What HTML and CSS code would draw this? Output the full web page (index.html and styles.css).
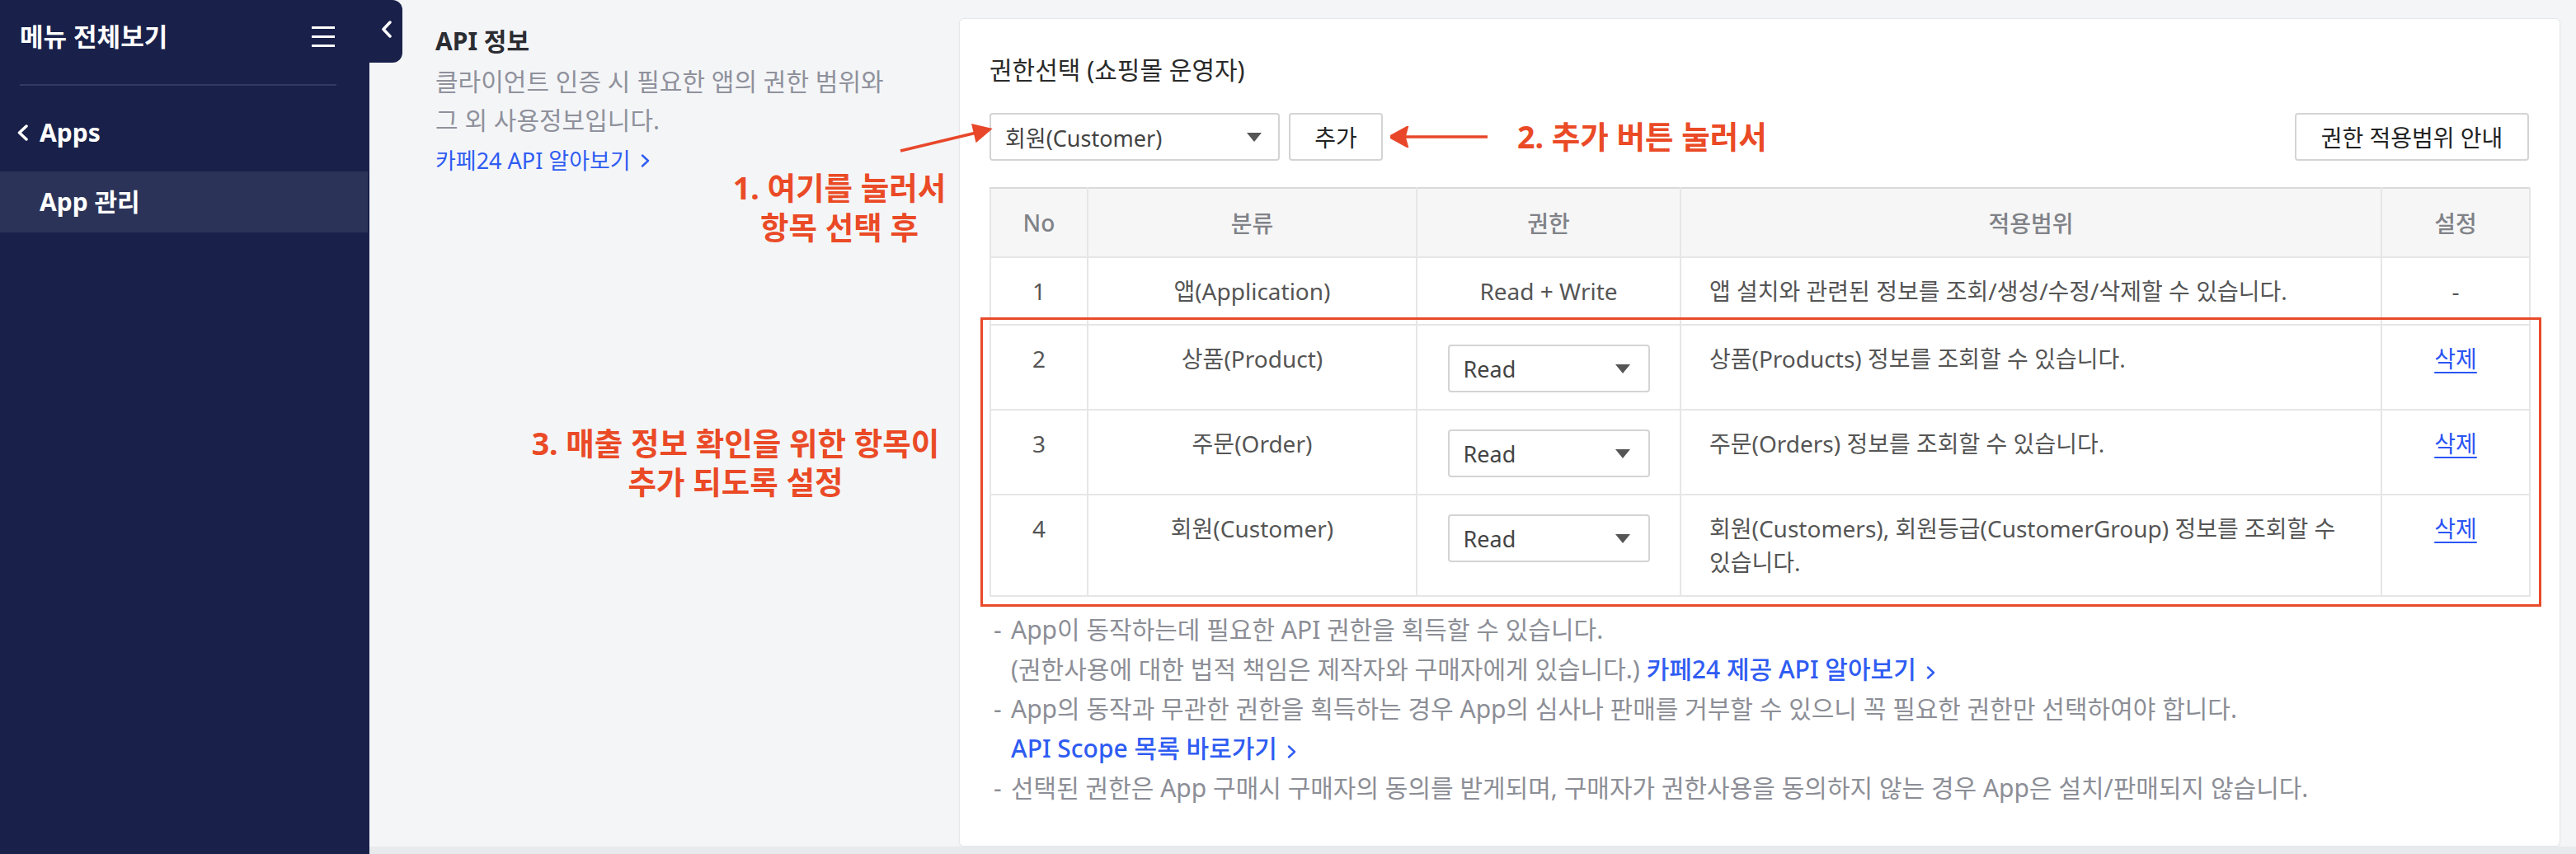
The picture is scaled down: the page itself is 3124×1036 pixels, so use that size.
FILE: index.html
```html
<!DOCTYPE html>
<html lang="ko">
<head>
<meta charset="utf-8">
<title>App 관리 - API 정보</title>
<link rel="stylesheet" href="styles.css">
</head>
<body>
<aside class="sidebar">
  <div class="side-head">
    <span class="side-title">메뉴 전체보기</span>
    <svg class="burger" width="28" height="25" viewBox="0 0 28 25"><rect x="0" y="0" width="28" height="3"/><rect x="0" y="11" width="28" height="3"/><rect x="0" y="22" width="28" height="3"/></svg>
  </div>
  <div class="side-divider"></div>
  <div class="side-back">
    <svg class="side-chev" width="14" height="20" viewBox="0 0 14 20"><path d="M12 2 L3.5 10 L12 18"/></svg>
    <span>Apps</span>
  </div>
  <div class="side-item">App 관리</div>
  <div class="side-tab">
    <svg class="tab-chev" width="13" height="21" viewBox="0 0 13 21"><path d="M11 2 L3 10.5 L11 19"/></svg>
  </div>
</aside>

<div class="main">
  <div class="content">
    <section class="intro">
      <h2 class="intro-title">API 정보</h2>
      <p class="intro-desc">클라이언트 인증 시 필요한 앱의 권한 범위와<br>그 외 사용정보입니다.</p>
      <a class="link intro-link" href="#">카페24 API 알아보기 <svg class="chev" width="11" height="16" viewBox="0 0 11 16"><path d="M2 1.5 L9 8 L2 14.5"/></svg></a>
    </section>

    <section class="card">
      <h3 class="card-title">권한선택 (쇼핑몰 운영자)</h3>
      <div class="controls">
        <div class="select select-wide"><span>회원(Customer)</span><svg class="caret" width="18" height="11" viewBox="0 0 18 11"><polygon points="0,0 18,0 9,11"/></svg></div>
        <button class="btn btn-add">추가</button>
        <svg class="arrow-2" width="118" height="26" viewBox="0 0 118 26"><line x1="14" y1="13" x2="118" y2="13"/><polygon points="0,13 20,2 17,13 20,24"/></svg>
        <span class="anno anno-2">2. 추가 버튼 눌러서</span>
        <button class="btn btn-guide">권한 적용범위 안내</button>
      </div>

      <table class="scope">
        <colgroup>
          <col class="c-no"><col class="c-cat"><col class="c-perm"><col class="c-range"><col class="c-set">
        </colgroup>
        <thead>
          <tr><th>No</th><th>분류</th><th>권한</th><th>적용범위</th><th>설정</th></tr>
        </thead>
        <tbody>
          <tr>
            <td>1</td>
            <td>앱(Application)</td>
            <td>Read + Write</td>
            <td class="range">앱 설치와 관련된 정보를 조회/생성/수정/삭제할 수 있습니다.</td>
            <td>-</td>
          </tr>
          <tr>
            <td>2</td>
            <td>상품(Product)</td>
            <td><div class="select select-perm"><span>Read</span><svg class="caret" width="18" height="11" viewBox="0 0 18 11"><polygon points="0,0 18,0 9,11"/></svg></div></td>
            <td class="range">상품(Products) 정보를 조회할 수 있습니다.</td>
            <td><a class="del" href="#">삭제</a></td>
          </tr>
          <tr>
            <td>3</td>
            <td>주문(Order)</td>
            <td><div class="select select-perm"><span>Read</span><svg class="caret" width="18" height="11" viewBox="0 0 18 11"><polygon points="0,0 18,0 9,11"/></svg></div></td>
            <td class="range">주문(Orders) 정보를 조회할 수 있습니다.</td>
            <td><a class="del" href="#">삭제</a></td>
          </tr>
          <tr>
            <td>4</td>
            <td>회원(Customer)</td>
            <td><div class="select select-perm"><span>Read</span><svg class="caret" width="18" height="11" viewBox="0 0 18 11"><polygon points="0,0 18,0 9,11"/></svg></div></td>
            <td class="range">회원(Customers), 회원등급(CustomerGroup) 정보를 조회할 수 있습니다.</td>
            <td><a class="del" href="#">삭제</a></td>
          </tr>
        </tbody>
      </table>

      <div class="notes">
        <div class="note"><span class="dash">-</span><span>App이 동작하는데 필요한 API 권한을 획득할 수 있습니다.<br>(권한사용에 대한 법적 책임은 제작자와 구매자에게 있습니다.) <a class="link note-link" href="#">카페24 제공 API 알아보기 <svg class="chev" width="11" height="16" viewBox="0 0 11 16"><path d="M2 1.5 L9 8 L2 14.5"/></svg></a></span></div>
        <div class="note"><span class="dash">-</span><span>App의 동작과 무관한 권한을 획득하는 경우 App의 심사나 판매를 거부할 수 있으니 꼭 필요한 권한만 선택하여야 합니다.<br><a class="link note-link" href="#">API Scope 목록 바로가기 <svg class="chev" width="11" height="16" viewBox="0 0 11 16"><path d="M2 1.5 L9 8 L2 14.5"/></svg></a></span></div>
        <div class="note"><span class="dash">-</span><span>선택된 권한은 App 구매시 구매자의 동의를 받게되며, 구매자가 권한사용을 동의하지 않는 경우 App은 설치/판매되지 않습니다.</span></div>
      </div>
    </section>
  </div>
  <div class="band"></div>
</div>

<div class="anno anno-1">1. 여기를 눌러서<br>항목 선택 후</div>
<div class="anno anno-3">3. 매출 정보 확인을 위한 항목이<br>추가 되도록 설정</div>
<svg class="arrow-1" width="130" height="60" viewBox="0 0 130 60"><line x1="12" y1="43" x2="104" y2="21"/><polygon points="120,17 104.6,30 100.4,12.4"/></svg>
<div class="red-box"></div>
</body>
</html>
```

FILE: styles.css
```css
html, body {
  margin: 0;
  padding: 0;
}

body {
  width: 3124px;
  height: 1036px;
  overflow: hidden;
  display: flex;
  position: relative;
  background: #f4f5f7;
  font-family: "Noto Sans", "Noto Sans CJK KR", sans-serif;
  color: #333;
  word-break: keep-all;
}

/* ---------- Sidebar ---------- */
.sidebar {
  width: 448px;
  flex: none;
  background: #19214a;
  position: relative;
  color: #fff;
}

.side-head {
  height: 88px;
  display: flex;
  align-items: center;
  justify-content: space-between;
  padding: 0 42px 0 24px;
}

.side-title {
  font-size: 31px;
  font-weight: 700;
  line-height: 40px;
}

.burger {
  display: block;
  fill: #fff;
}

.side-divider {
  height: 2px;
  background: #323a63;
  margin: 14px 40px 0 24px;
}

.side-back {
  height: 95px;
  margin-top: 9px;
  display: flex;
  align-items: center;
  gap: 14px;
  padding-left: 20px;
  font-size: 30px;
  font-weight: 700;
  line-height: 40px;
}

.side-chev,
.tab-chev {
  display: block;
  fill: none;
  stroke: #fff;
  stroke-width: 3.5;
  stroke-linecap: round;
  stroke-linejoin: round;
}

.side-item {
  height: 74px;
  margin-right: 2px;
  display: flex;
  align-items: center;
  padding-left: 48px;
  font-size: 30px;
  font-weight: 700;
  line-height: 40px;
  background: #2b3359;
}

.side-tab {
  position: absolute;
  left: 448px;
  top: 0;
  width: 40px;
  height: 76px;
  background: #19214a;
  border-radius: 0 12px 12px 0;
  display: flex;
  justify-content: center;
  align-items: flex-start;
  padding-top: 25px;
  box-sizing: border-box;
}

/* ---------- Main ---------- */
.main {
  flex: 1;
  display: flex;
  flex-direction: column;
}

.content {
  height: 1027px;
  display: flex;
  align-items: flex-start;
}

.band {
  height: 9px;
  background: #e9eaed;
}

.intro {
  width: 715px;
  flex: none;
  box-sizing: border-box;
  padding-left: 80px;
}

.intro-title {
  margin: 30px 0 0;
  font-size: 30px;
  line-height: 40px;
  font-weight: 700;
  color: #2b2d33;
}

.intro-desc {
  margin: 5px 0 0;
  font-size: 30px;
  line-height: 47px;
  color: #8f919c;
}

.link {
  color: #2f5cf2;
  text-decoration: none;
}

.intro-link {
  display: inline-flex;
  align-items: center;
  gap: 12px;
  margin-top: 6px;
  font-size: 27px;
  line-height: 40px;
}

.chev {
  fill: none;
  stroke: #2f5cf2;
  stroke-width: 2.4;
  stroke-linecap: round;
  stroke-linejoin: round;
}

/* ---------- Card ---------- */
.card {
  width: 1942px;
  height: 1005px;
  margin-top: 22px;
  box-sizing: border-box;
  background: #fff;
  border: 1px solid #e6e7ea;
  border-radius: 6px;
  padding: 42px 37px 0 36px;
  box-shadow: 0 1px 3px rgba(0, 0, 0, 0.04);
}

.card-title {
  margin: 0;
  font-size: 30px;
  line-height: 40px;
  font-weight: 400;
  color: #2a2a2a;
}

.controls {
  margin-top: 32px;
  height: 58px;
  display: flex;
  align-items: center;
}

.select {
  box-sizing: border-box;
  height: 58px;
  border: 2px solid #d4d4d4;
  border-radius: 4px;
  background: #fff;
  display: flex;
  align-items: center;
  justify-content: space-between;
  color: #444;
}

.select-wide {
  width: 352px;
  padding: 0 20px 0 17px;
  font-size: 27px;
}

.caret {
  display: block;
  fill: #555;
}

.btn {
  box-sizing: border-box;
  height: 58px;
  border: 2px solid #d4d4d4;
  border-radius: 4px;
  background: #fff;
  font-family: inherit;
  font-size: 28px;
  color: #222;
  padding: 0;
}

.btn-add {
  width: 114px;
  margin-left: 11px;
}

.arrow-2 {
  display: block;
  margin-left: 9px;
  fill: #e8472a;
  stroke: #e8472a;
  stroke-width: 3.5;
}

.anno {
  color: #ea4a26;
  font-weight: 700;
  font-size: 37.5px;
  line-height: 48px;
}

.anno-2 {
  margin-left: 36px;
}

.btn-guide {
  width: 284px;
  margin-left: auto;
}

/* ---------- Table ---------- */
.scope {
  margin-top: 32px;
  width: 1867px;
  table-layout: fixed;
  border-collapse: collapse;
  font-size: 28px;
}

.c-no { width: 118px; }
.c-cat { width: 399px; }
.c-perm { width: 320px; }
.c-range { width: 850px; }
.c-set { width: 180px; }

.scope th,
.scope td {
  border: 2px solid #e6e6e6;
}

.scope th {
  height: 82px;
  padding: 0;
  background: #f6f6f6;
  color: #808288;
  font-weight: 500;
  border-top-color: #d9d9d9;
}

.scope td {
  padding: 20px 20px 19px;
  line-height: 41px;
  vertical-align: top;
  text-align: center;
  color: #555;
}

.scope td.range {
  text-align: left;
  padding-left: 34px;
  padding-right: 30px;
}

.select-perm {
  width: 245px;
  margin: 3px auto 1px;
  padding: 0 22px 0 17px;
  font-size: 27px;
}

.del {
  color: #2a55f3;
  text-decoration: underline;
  text-underline-offset: 5px;
  text-decoration-thickness: 2px;
}

/* ---------- Notes ---------- */
.notes {
  margin-top: 16px;
  padding-left: 5px;
}

.note {
  display: flex;
  font-size: 30px;
  line-height: 48px;
  color: #8c8e96;
}

.dash {
  width: 21px;
  flex: none;
}

.note-link {
  font-weight: 500;
}

.note-link .chev {
  margin-left: 4px;
  vertical-align: -1px;
}

/* ---------- Annotations (overlay) ---------- */
.anno-1 {
  position: absolute;
  left: 870px;
  top: 204px;
  width: 296px;
  text-align: center;
}

.anno-3 {
  position: absolute;
  left: 592px;
  top: 514px;
  width: 600px;
  text-align: center;
  line-height: 47px;
}

.arrow-1 {
  position: absolute;
  left: 1080px;
  top: 140px;
  fill: #e8472a;
  stroke: #e8472a;
  stroke-width: 3.5;
}

.red-box {
  position: absolute;
  left: 1189px;
  top: 385px;
  width: 1893px;
  height: 351px;
  box-sizing: border-box;
  border: 3px solid #e84a2a;
  pointer-events: none;
}
```
